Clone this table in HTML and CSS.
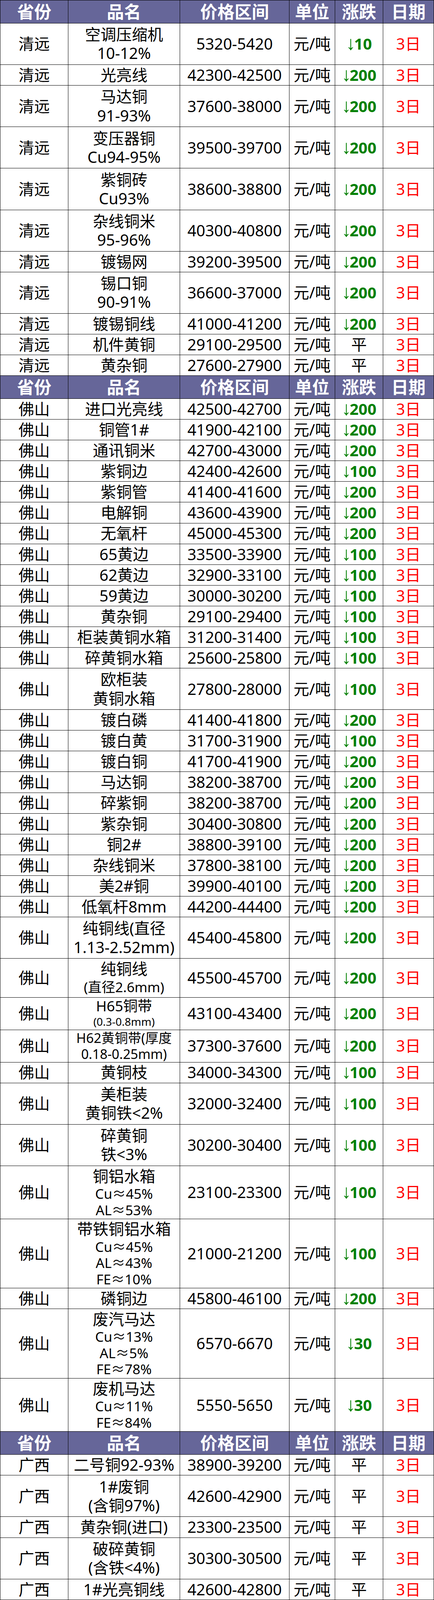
FILE: index.html
```html
<!DOCTYPE html>
<html lang="zh-CN">
<head>
<meta charset="utf-8">
<title>铜价表</title>
<link rel="stylesheet" href="styles.css">
</head>
<body>
<div class="sheet">
  <div class="row hd"><div class="c">省份</div><div class="c">品名</div><div class="c">价格区间</div><div class="c">单位</div><div class="c">涨跌</div><div class="c">日期</div></div>

  <div class="row h110"><div class="c">清远</div><div class="c"><span>空调压缩机</span><span>10-12%</span></div><div class="c">5320-5420</div><div class="c">元/吨</div><div class="c dn"><span><i class="ar">↓</i>10</span></div><div class="c dt">3日</div></div>
  <div class="row"><div class="c">清远</div><div class="c">光亮线</div><div class="c">42300-42500</div><div class="c">元/吨</div><div class="c dn"><span><i class="ar">↓</i>200</span></div><div class="c dt">3日</div></div>
  <div class="row h110"><div class="c">清远</div><div class="c"><span>马达铜</span><span>91-93%</span></div><div class="c">37600-38000</div><div class="c">元/吨</div><div class="c dn"><span><i class="ar">↓</i>200</span></div><div class="c dt">3日</div></div>
  <div class="row h110"><div class="c">清远</div><div class="c"><span>变压器铜</span><span>Cu94-95%</span></div><div class="c">39500-39700</div><div class="c">元/吨</div><div class="c dn"><span><i class="ar">↓</i>200</span></div><div class="c dt">3日</div></div>
  <div class="row h110"><div class="c">清远</div><div class="c"><span>紫铜砖</span><span>Cu93%</span></div><div class="c">38600-38800</div><div class="c">元/吨</div><div class="c dn"><span><i class="ar">↓</i>200</span></div><div class="c dt">3日</div></div>
  <div class="row h110"><div class="c">清远</div><div class="c"><span>杂线铜米</span><span>95-96%</span></div><div class="c">40300-40800</div><div class="c">元/吨</div><div class="c dn"><span><i class="ar">↓</i>200</span></div><div class="c dt">3日</div></div>
  <div class="row"><div class="c">清远</div><div class="c">镀锡网</div><div class="c">39200-39500</div><div class="c">元/吨</div><div class="c dn"><span><i class="ar">↓</i>200</span></div><div class="c dt">3日</div></div>
  <div class="row h110"><div class="c">清远</div><div class="c"><span>锡口铜</span><span>90-91%</span></div><div class="c">36600-37000</div><div class="c">元/吨</div><div class="c dn"><span><i class="ar">↓</i>200</span></div><div class="c dt">3日</div></div>
  <div class="row"><div class="c">清远</div><div class="c">镀锡铜线</div><div class="c">41000-41200</div><div class="c">元/吨</div><div class="c dn"><span><i class="ar">↓</i>200</span></div><div class="c dt">3日</div></div>
  <div class="row"><div class="c">清远</div><div class="c">机件黄铜</div><div class="c">29100-29500</div><div class="c">元/吨</div><div class="c">平</div><div class="c dt">3日</div></div>
  <div class="row"><div class="c">清远</div><div class="c">黄杂铜</div><div class="c">27600-27900</div><div class="c">元/吨</div><div class="c">平</div><div class="c dt">3日</div></div>

  <div class="row hd"><div class="c">省份</div><div class="c">品名</div><div class="c">价格区间</div><div class="c">单位</div><div class="c">涨跌</div><div class="c">日期</div></div>

  <div class="row"><div class="c">佛山</div><div class="c">进口光亮线</div><div class="c">42500-42700</div><div class="c">元/吨</div><div class="c dn"><span><i class="ar">↓</i>200</span></div><div class="c dt">3日</div></div>
  <div class="row"><div class="c">佛山</div><div class="c">铜管1#</div><div class="c">41900-42100</div><div class="c">元/吨</div><div class="c dn"><span><i class="ar">↓</i>200</span></div><div class="c dt">3日</div></div>
  <div class="row"><div class="c">佛山</div><div class="c">通讯铜米</div><div class="c">42700-43000</div><div class="c">元/吨</div><div class="c dn"><span><i class="ar">↓</i>200</span></div><div class="c dt">3日</div></div>
  <div class="row"><div class="c">佛山</div><div class="c">紫铜边</div><div class="c">42400-42600</div><div class="c">元/吨</div><div class="c dn"><span><i class="ar">↓</i>100</span></div><div class="c dt">3日</div></div>
  <div class="row"><div class="c">佛山</div><div class="c">紫铜管</div><div class="c">41400-41600</div><div class="c">元/吨</div><div class="c dn"><span><i class="ar">↓</i>200</span></div><div class="c dt">3日</div></div>
  <div class="row"><div class="c">佛山</div><div class="c">电解铜</div><div class="c">43600-43900</div><div class="c">元/吨</div><div class="c dn"><span><i class="ar">↓</i>200</span></div><div class="c dt">3日</div></div>
  <div class="row"><div class="c">佛山</div><div class="c">无氧杆</div><div class="c">45000-45300</div><div class="c">元/吨</div><div class="c dn"><span><i class="ar">↓</i>200</span></div><div class="c dt">3日</div></div>
  <div class="row"><div class="c">佛山</div><div class="c">65黄边</div><div class="c">33500-33900</div><div class="c">元/吨</div><div class="c dn"><span><i class="ar">↓</i>100</span></div><div class="c dt">3日</div></div>
  <div class="row"><div class="c">佛山</div><div class="c">62黄边</div><div class="c">32900-33100</div><div class="c">元/吨</div><div class="c dn"><span><i class="ar">↓</i>100</span></div><div class="c dt">3日</div></div>
  <div class="row"><div class="c">佛山</div><div class="c">59黄边</div><div class="c">30000-30200</div><div class="c">元/吨</div><div class="c dn"><span><i class="ar">↓</i>100</span></div><div class="c dt">3日</div></div>
  <div class="row"><div class="c">佛山</div><div class="c">黄杂铜</div><div class="c">29100-29400</div><div class="c">元/吨</div><div class="c dn"><span><i class="ar">↓</i>100</span></div><div class="c dt">3日</div></div>
  <div class="row"><div class="c">佛山</div><div class="c">柜装黄铜水箱</div><div class="c">31200-31400</div><div class="c">元/吨</div><div class="c dn"><span><i class="ar">↓</i>100</span></div><div class="c dt">3日</div></div>
  <div class="row"><div class="c">佛山</div><div class="c">碎黄铜水箱</div><div class="c">25600-25800</div><div class="c">元/吨</div><div class="c dn"><span><i class="ar">↓</i>100</span></div><div class="c dt">3日</div></div>
  <div class="row h110"><div class="c">佛山</div><div class="c"><span>欧柜装</span><span>黄铜水箱</span></div><div class="c">27800-28000</div><div class="c">元/吨</div><div class="c dn"><span><i class="ar">↓</i>100</span></div><div class="c dt">3日</div></div>
  <div class="row"><div class="c">佛山</div><div class="c">镀白磷</div><div class="c">41400-41800</div><div class="c">元/吨</div><div class="c dn"><span><i class="ar">↓</i>200</span></div><div class="c dt">3日</div></div>
  <div class="row"><div class="c">佛山</div><div class="c">镀白黄</div><div class="c">31700-31900</div><div class="c">元/吨</div><div class="c dn"><span><i class="ar">↓</i>100</span></div><div class="c dt">3日</div></div>
  <div class="row"><div class="c">佛山</div><div class="c">镀白铜</div><div class="c">41700-41900</div><div class="c">元/吨</div><div class="c dn"><span><i class="ar">↓</i>200</span></div><div class="c dt">3日</div></div>
  <div class="row"><div class="c">佛山</div><div class="c">马达铜</div><div class="c">38200-38700</div><div class="c">元/吨</div><div class="c dn"><span><i class="ar">↓</i>200</span></div><div class="c dt">3日</div></div>
  <div class="row"><div class="c">佛山</div><div class="c">碎紫铜</div><div class="c">38200-38700</div><div class="c">元/吨</div><div class="c dn"><span><i class="ar">↓</i>200</span></div><div class="c dt">3日</div></div>
  <div class="row"><div class="c">佛山</div><div class="c">紫杂铜</div><div class="c">30400-30800</div><div class="c">元/吨</div><div class="c dn"><span><i class="ar">↓</i>200</span></div><div class="c dt">3日</div></div>
  <div class="row"><div class="c">佛山</div><div class="c">铜2#</div><div class="c">38800-39100</div><div class="c">元/吨</div><div class="c dn"><span><i class="ar">↓</i>200</span></div><div class="c dt">3日</div></div>
  <div class="row"><div class="c">佛山</div><div class="c">杂线铜米</div><div class="c">37800-38100</div><div class="c">元/吨</div><div class="c dn"><span><i class="ar">↓</i>200</span></div><div class="c dt">3日</div></div>
  <div class="row"><div class="c">佛山</div><div class="c">美2#铜</div><div class="c">39900-40100</div><div class="c">元/吨</div><div class="c dn"><span><i class="ar">↓</i>200</span></div><div class="c dt">3日</div></div>
  <div class="row"><div class="c">佛山</div><div class="c">低氧杆8mm</div><div class="c">44200-44400</div><div class="c">元/吨</div><div class="c dn"><span><i class="ar">↓</i>200</span></div><div class="c dt">3日</div></div>
  <div class="row h110"><div class="c">佛山</div><div class="c"><span>纯铜线(直径</span><span>1.13-2.52mm)</span></div><div class="c">45400-45800</div><div class="c">元/吨</div><div class="c dn"><span><i class="ar">↓</i>200</span></div><div class="c dt">3日</div></div>
  <div class="row h103"><div class="c">佛山</div><div class="c"><span>纯铜线</span><span class="sm2">(直径2.6mm)</span></div><div class="c">45500-45700</div><div class="c">元/吨</div><div class="c dn"><span><i class="ar">↓</i>200</span></div><div class="c dt">3日</div></div>
  <div class="row h86"><div class="c">佛山</div><div class="c"><span class="m37">H65铜带</span><span class="xs">(0.3-0.8mm)</span></div><div class="c">43100-43400</div><div class="c">元/吨</div><div class="c dn"><span><i class="ar">↓</i>200</span></div><div class="c dt">3日</div></div>
  <div class="row h86"><div class="c">佛山</div><div class="c"><span class="m34">H62黄铜带(厚度</span><span class="m34">0.18-0.25mm)</span></div><div class="c">37300-37600</div><div class="c">元/吨</div><div class="c dn"><span><i class="ar">↓</i>200</span></div><div class="c dt">3日</div></div>
  <div class="row"><div class="c">佛山</div><div class="c">黄铜枝</div><div class="c">34000-34300</div><div class="c">元/吨</div><div class="c dn"><span><i class="ar">↓</i>100</span></div><div class="c dt">3日</div></div>
  <div class="row h110"><div class="c">佛山</div><div class="c"><span>美柜装</span><span>黄铜铁&lt;2%</span></div><div class="c">32000-32400</div><div class="c">元/吨</div><div class="c dn"><span><i class="ar">↓</i>100</span></div><div class="c dt">3日</div></div>
  <div class="row h110"><div class="c">佛山</div><div class="c"><span>碎黄铜</span><span>铁&lt;3%</span></div><div class="c">30200-30400</div><div class="c">元/吨</div><div class="c dn"><span><i class="ar">↓</i>100</span></div><div class="c dt">3日</div></div>
  <div class="row h141"><div class="c">佛山</div><div class="c"><span>铜铝水箱</span><span class="sm">Cu≈45%</span><span class="sm">AL≈53%</span></div><div class="c">23100-23300</div><div class="c">元/吨</div><div class="c dn"><span><i class="ar">↓</i>100</span></div><div class="c dt">3日</div></div>
  <div class="row h183"><div class="c">佛山</div><div class="c"><span>带铁铜铝水箱</span><span class="sm">Cu≈45%</span><span class="sm">AL≈43%</span><span class="sm">FE≈10%</span></div><div class="c">21000-21200</div><div class="c">元/吨</div><div class="c dn"><span><i class="ar">↓</i>100</span></div><div class="c dt">3日</div></div>
  <div class="row"><div class="c">佛山</div><div class="c">磷铜边</div><div class="c">45800-46100</div><div class="c">元/吨</div><div class="c dn"><span><i class="ar">↓</i>200</span></div><div class="c dt">3日</div></div>
  <div class="row h185"><div class="c">佛山</div><div class="c"><span>废汽马达</span><span class="sm">Cu≈13%</span><span class="sm">AL≈5%</span><span class="sm">FE≈78%</span></div><div class="c">6570-6670</div><div class="c">元/吨</div><div class="c dn"><span><i class="ar">↓</i>30</span></div><div class="c dt">3日</div></div>
  <div class="row h141"><div class="c">佛山</div><div class="c"><span>废机马达</span><span class="sm">Cu≈11%</span><span class="sm">FE≈84%</span></div><div class="c">5550-5650</div><div class="c">元/吨</div><div class="c dn"><span><i class="ar">↓</i>30</span></div><div class="c dt">3日</div></div>

  <div class="row hd"><div class="c">省份</div><div class="c">品名</div><div class="c">价格区间</div><div class="c">单位</div><div class="c">涨跌</div><div class="c">日期</div></div>

  <div class="row"><div class="c">广西</div><div class="c">二号铜92-93%</div><div class="c">38900-39200</div><div class="c">元/吨</div><div class="c">平</div><div class="c dt">3日</div></div>
  <div class="row h110"><div class="c">广西</div><div class="c"><span>1#废铜</span><span>(含铜97%)</span></div><div class="c">42600-42900</div><div class="c">元/吨</div><div class="c">平</div><div class="c dt">3日</div></div>
  <div class="row"><div class="c">广西</div><div class="c">黄杂铜(进口)</div><div class="c">23300-23500</div><div class="c">元/吨</div><div class="c">平</div><div class="c dt">3日</div></div>
  <div class="row h110"><div class="c">广西</div><div class="c"><span>破碎黄铜</span><span>(含铁&lt;4%)</span></div><div class="c">30300-30500</div><div class="c">元/吨</div><div class="c">平</div><div class="c dt">3日</div></div>
  <div class="row"><div class="c">广西</div><div class="c">1#光亮铜线</div><div class="c">42600-42800</div><div class="c">元/吨</div><div class="c">平</div><div class="c dt">3日</div></div>
</div>
</body>
</html>
```

FILE: styles.css
```css
:root {
  --k: 0.965119;
}

html, body {
  margin: 0;
  padding: 0;
  background: #ffffff;
}

body {
  font-family: "Noto Sans", "Noto Sans CJK SC", sans-serif;
  color: #000000;
}

.sheet {
  width: 1111px;
  box-sizing: border-box;
  border-top: 1px solid #000;
  border-left: 1px solid #000;
  border-right: 1px solid #000;
}

.row {
  display: grid;
  grid-template-columns: 174px 286px 280px 117px 123px 129px;
  box-sizing: border-box;
  height: calc(55px * var(--k));
  border-bottom: 1px solid #000;
}

.h86 { height: calc(86px * var(--k)); }
.h103 { height: calc(103px * var(--k)); }
.h110 { height: calc(110px * var(--k)); }
.h141 { height: calc(141px * var(--k)); }
.h183 { height: calc(183px * var(--k)); }
.h185 { height: calc(185px * var(--k)); }

.c {
  display: flex;
  flex-direction: column;
  align-items: center;
  justify-content: center;
  border-right: 1px solid #000;
  font-size: 40px;
  line-height: calc(50px * var(--k));
  white-space: nowrap;
  text-align: center;
}

.c:last-child {
  border-right: 0;
}

.hd {
  height: calc(61px * var(--k));
  background: #666699;
}

.hd .c {
  color: #ffffff;
  font-weight: bold;
  font-size: 44px;
  line-height: calc(56px * var(--k));
}

.sm {
  font-size: 35px;
  line-height: calc(43px * var(--k));
}

.sm2 {
  font-size: 35px;
  line-height: calc(48px * var(--k));
}

.m37 {
  font-size: 37px;
  line-height: calc(44px * var(--k));
}

.m34 {
  font-size: 34px;
  line-height: calc(42px * var(--k));
}

.xs {
  font-size: 28px;
  line-height: calc(40px * var(--k));
}

.dn {
  color: #008000;
  font-weight: bold;
}

.ar {
  font-style: normal;
  font-weight: normal;
  font-family: "Liberation Sans", sans-serif;
  font-size: 1.22em;
  line-height: 0;
  margin-right: -0.08em;
}

.dt {
  color: #ff0000;
}
```
